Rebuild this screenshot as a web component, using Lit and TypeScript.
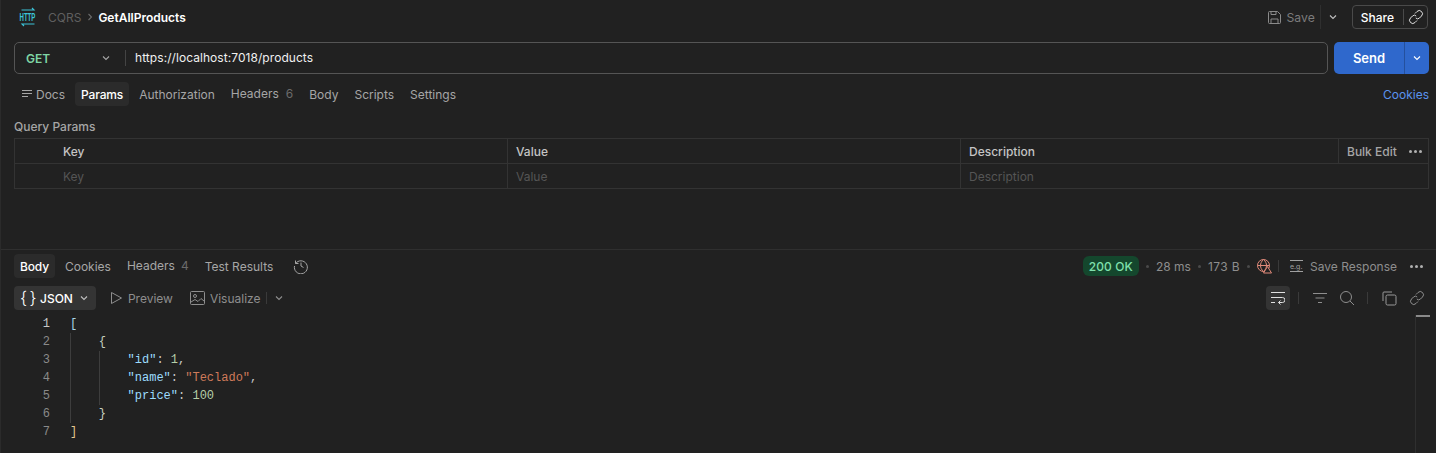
import { LitElement, html, css } from "lit";
import { customElement } from "lit/decorators.js";

const chev = (c = "#a6a6a6") => html`<svg width="10" height="10" viewBox="0 0 10 10" fill="none" stroke=${c} stroke-width="1.1"><path d="M2 3.5 5 6.5 8 3.5"/></svg>`;
const link = (c = "#b0b0b0") => html`<svg width="16" height="16" viewBox="0 0 16 16" fill="none" stroke=${c} stroke-width="1"><path d="M7 4.5 9 2.5a2.6 2.6 0 0 1 4.5 4.5L11.5 9a2.6 2.6 0 0 1-3.7 0"/><path d="M9 11.500 7 13.500A2.600 2.600 0 0 1 2.500 9L4.500 7a2.600 2.600 0 0 1 3.700 0"/></svg>`;

@customElement("app-root")
export class AppRoot extends LitElement {
  static styles = css`
    :host { display: block; height: 453px; overflow: hidden; background: #212121; color: #a6a6a6; font-family: Inter, "Liberation Sans", sans-serif; font-size: 12px; border-left: 1px solid #2b2b2b; box-sizing: border-box; }
    svg { display: block; flex: none; }
    .row { display: flex; align-items: center; }

    .top { height: 34px; padding: 0 8px 0 17px; justify-content: space-between; }
    .dim { color: #5f5f5f; margin-left: 10px; margin-right: 4px; }
    .cur { color: #fff; font-weight: 600; margin-left: 3px; }
    .save { color: #7c7c7c; gap: 5px; font-size: 12.2px; margin-right: 5px; }
    .vline { width: 1px; background: #2f2f2f; height: 24px; }
    .top-chev { margin: 0 14px 0 7px; }
    .share { border: 1px solid #4a4a4a; border-radius: 4px; height: 24px; box-sizing: border-box; padding: 0 3px 0 8px; color: #fff; font-weight: 500; }
    .share i { width: 1px; height: 16px; background: #4a4a4a; margin: 0 4px 0 9px; }

    .urlbar { margin-top: 8px; padding: 0 7px 0 13px; gap: 6px; }
    .url { flex: 1; height: 32px; box-sizing: border-box; border: 1px solid #555; border-radius: 5px; }
    .method { width: 110px; padding-left: 11px; padding-right: 14px; box-sizing: border-box; justify-content: space-between; color: #7fd6a5; font-weight: 600; }
    .url i { width: 1px; height: 16px; background: #444; }
    .addr { margin-left: 9px; padding-bottom: 2px; color: #f0f0f0; letter-spacing: .06px; }
    .send { background: #2f68cc; border-radius: 5px; height: 32px; width: 95px; color: #fff; font-weight: 600; font-size: 13px; }
    .send span { flex: 1; text-align: center; }
    .send div { width: 25px; height: 32px; border-left: 1px solid #24509e; display: flex; align-items: center; justify-content: center; box-sizing: border-box; }

    .tabs { gap: 4px; }
    .tab { padding: 0 6px; height: 24px; display: flex; align-items: center; gap: 7px; border-radius: 4px; }
    .tab.docs { gap: 3px; }
    .tab.hd { box-sizing: border-box; padding-bottom: 2px; }
    .tab.on { background: #2b2b2b; color: #fff; font-weight: 500; letter-spacing: -.15px; }
    .tab em { font-style: normal; color: #6b6b6b; }
    .tabs1 { margin-top: 8px; padding: 0 7px 0 14px; justify-content: space-between; }
    .cookies { color: #5a93ee; }

    .qp { margin: 13px 0 3px 13px; font-weight: 500; line-height: 16px; }
    .tbl { margin: 0 7px 0 13px; border: 1px solid #333; display: grid; grid-template-columns: 493px 453px 378px 1fr; }
    .tbl > div { height: 25px; box-sizing: border-box; display: flex; align-items: center; border-bottom: 1px solid #333; border-right: 1px solid #333; padding-left: 8px; font-weight: 500; color: #c4c4c4; }
    .tbl > .first { padding-left: 48px; }
    .tbl > .ph { height: 24px; border-bottom: 0; color: #555; font-weight: 400; }
    .tbl > .nb { border-right: 0; }
    .tbl > .bulk { border-right: 0; justify-content: space-between; padding-right: 6px; color: #a6a6a6; }
    .dots { gap: 2px; }
    .dots i { width: 3px; height: 3px; background: #b0b0b0; border-radius: 50%; }

    .divider { height: 1px; background: #2f2f2f; margin-top: 60px; }
    .tabs2 { margin-top: 4px; padding: 0 13px 0 13px; justify-content: space-between; }
    .tabs2 .tab.hd { gap: 6px; }
    .hist { margin-left: 10px; }
    .stats { gap: 6px; color: #8e8e8e; }
    .badge { background: #14472d; color: #7fe0ac; border-radius: 6px; height: 20px; padding: 0 6px; display: flex; align-items: center; font-weight: 500; letter-spacing: .1px; }
    .dot { width: 3px; height: 3px; border-radius: 50%; background: #4a4a4a; margin: 0 1px; }
    .size { letter-spacing: .4px; }
    .globe { margin-left: -1px; }
    .sep2 { width: 1px; height: 12px; background: #3a3a3a; margin-right: 4px; }
    .more { margin-left: 7px; }

    .tools { margin-top: 8px; padding: 0 11px 0 13px; justify-content: space-between; }
    .tl { gap: 13px; }
    .json { background: #343434; border-radius: 4px; height: 24px; padding: 0 7px 0 6px; color: #fff; font-weight: 500; }
    .json b { font: 300 17px Inter, sans-serif; letter-spacing: 2.5px; margin-right: 1px; width: 19px; white-space: nowrap; }
    .json span { margin-right: 6px; }
    .ghost { color: #8e8e8e; gap: 5px; display: flex; align-items: center; }
    .viz { margin-left: 4px; }
    .sep { width: 1px; height: 12px; background: #3a3a3a; }
    .s1 { margin-left: -8px; }
    .c1 { margin-left: -6px; }
    .wrap { background: #343434; border-radius: 4px; width: 24px; height: 24px; display: flex; align-items: center; justify-content: center; }
    .m8 { margin-left: 8px; } .m13 { margin-left: 13px; } .m11 { margin-left: 11px; } .m12 { margin-left: 12px; } .m14 { margin-left: 14px; }

    .code { position: relative; margin-top: 5px; font: 12px/18px "Liberation Mono", monospace; }
    .ln { display: flex; height: 18px; }
    .n { width: 49px; text-align: right; color: #8a8a8a; }
    .n.act { color: #c8c8c8; }
    .ln pre { margin: 0; font: inherit; color: #c9c9c9; padding-left: 20px; }
    .k { color: #9cdcfe; } .s { color: #ce7a5a; } .v { color: #b5cea8; } .b { color: #e0c890; } .c { color: #a8d4e6; } .g { color: #c8d0c0; }
    .guide { position: absolute; width: 1px; background: #3d3d3d; }
    .g1 { left: 69px; top: 18px; height: 90px; }
    .g2 { left: 98px; top: 36px; height: 54px; }
    .mini { position: absolute; left: 1414px; top: 0; width: 14px; height: 140px; border-left: 1px solid #2f2f2f; }
    .mini::before { content: ""; display: block; height: 2px; background: #8a8a8a; }
    .logo text { font: 700 8px "Liberation Sans", sans-serif; fill: #3cc4d8; }
  `;

  render() {
    const dots = html`<div class="row dots"><i></i><i></i><i></i></div>`;
    const lines = [
      html`<span class="c">[</span>`,
      html`    <span class="g">{</span>`,
      html`        <span class="k">"id"</span>: <span class="v">1</span>,`,
      html`        <span class="k">"name"</span>: <span class="s">"Teclado"</span>,`,
      html`        <span class="k">"price"</span>: <span class="v">100</span>`,
      html`    <span class="g">}</span>`,
      html`<span class="b">]</span>`,
    ];
    return html`
      <div class="row top">
        <div class="row">
          <svg class="logo" width="20" height="20" viewBox="0 0 20 20" fill="none" stroke="#3cc4d8" stroke-width="1.1">
            <path d="M3.500 3H16L14 1M16.500 17H4L6 19"/>
            <text transform="translate(1.500 14) scale(.76 1.300)" stroke="none">HTTP</text>
          </svg>
          <span class="dim">CQRS</span>
          <svg width="10" height="10" viewBox="0 0 10 10" fill="none" stroke="#6b6b6b" stroke-width="1.1"><path d="M3.500 2 6.500 5 3.500 8"/></svg>
          <span class="cur">GetAllProducts</span>
        </div>
        <div class="row">
          <div class="row save">
            <svg width="15" height="15" viewBox="0 0 15 15" fill="none" stroke="#8a8a8a" stroke-width="1"><path d="M1.500 2.500a1 1 0 0 1 1-1h8l3 3v8a1 1 0 0 1-1 1h-10a1 1 0 0 1-1-1zM4 1.500v3h5v-3M4 13.500v-4.500h7v4.500"/></svg>
            <span>Save</span>
          </div>
          <div class="vline"></div>
          <div class="top-chev">${chev("#c0c0c0")}</div>
          <div class="row share"><span>Share</span><i></i>${link("#e0e0e0")}</div>
        </div>
      </div>

      <div class="row urlbar">
        <div class="row url">
          <div class="row method"><span>GET</span>${chev()}</div><i></i><span class="addr">https://localhost:7018/products</span>
        </div>
        <div class="row send"><span>Send</span><div>${chev("#fff")}</div></div>
      </div>

      <div class="row tabs1">
        <div class="row tabs">
          <div class="tab docs"><svg width="12" height="12" viewBox="0 0 12 12" stroke="#a6a6a6" fill="none"><path d="M1 2.500H11M1 5.500H11M1 8.500H7"/></svg>Docs</div>
          <div class="tab on">Params</div>
          <div class="tab">Authorization</div>
          <div class="tab hd">Headers <em>6</em></div>
          <div class="tab">Body</div>
          <div class="tab">Scripts</div>
          <div class="tab">Settings</div>
        </div>
        <span class="cookies">Cookies</span>
      </div>

      <div class="qp">Query Params</div>
      <div class="tbl">
        <div class="first">Key</div><div>Value</div><div>Description</div>
        <div class="bulk"><span>Bulk Edit</span>${dots}</div>
        <div class="first ph">Key</div><div class="ph">Value</div><div class="ph nb">Description</div><div class="ph nb"></div>
      </div>

      <div class="divider"></div>

      <div class="row tabs2">
        <div class="row tabs">
          <div class="tab on">Body</div>
          <div class="tab">Cookies</div>
          <div class="tab hd">Headers <em>4</em></div>
          <div class="tab">Test Results</div>
          <svg class="hist" width="16" height="16" viewBox="0 0 16 16" fill="none" stroke="#a6a6a6" stroke-width="1"><path d="M2.600 5.500A6.500 6.500 0 1 1 1.500 8M2.500 2.500v3h3M8 4.500V8l2.500 1.500"/></svg>
        </div>
        <div class="row stats">
          <span class="badge">200 OK</span><i class="dot"></i><span>28 ms</span><i class="dot"></i><span class="size">173 B</span><i class="dot"></i>
          <svg class="globe" width="16" height="16" viewBox="0 0 16 16" fill="none" stroke="#e08a7a" stroke-width="1"><circle cx="7.500" cy="7.500" r="6"/><path d="M1.500 7.500h12M7.500 1.500c-4 3.500-4 8.500 0 12M7.500 1.500c4 3.500 4 8.500 0 12"/><path fill="#212121" d="M11.500 8.500 15.500 15h-8z"/></svg>
          <div class="sep2"></div>
          <svg width="15" height="14" viewBox="0 0 15 14" fill="none" stroke="#a0a0a0"><path d="M1 1.500H14M1 12.500H14"/><text x="1" y="9.500" font-size="7" fill="#a0a0a0" stroke="none" font-family="Inter">e.g.</text></svg>
          <span>Save Response</span>
          <div class="more">${dots}</div>
        </div>
      </div>

      <div class="row tools">
        <div class="row tl">
          <div class="row json"><b>{}</b><span>JSON</span>${chev("#c0c0c0")}</div>
          <span class="ghost"><svg width="14" height="14" viewBox="0 0 14 14" fill="none" stroke="#8e8e8e"><path d="M2.500 1.500 12.500 7 2.500 12.500z"/></svg>Preview</span>
          <span class="ghost viz"><svg width="15" height="14" viewBox="0 0 15 14" fill="none" stroke="#8e8e8e"><rect x=".5" y=".5" width="14" height="13" rx="1"/><circle cx="5" cy="5" r="1.500"/><path d="M1 11 5 8.500 8 10.500 11 7.500 14 10"/></svg>Visualize</span>
          <div class="sep s1"></div>
          <div class="c1">${chev("#8e8e8e")}</div>
        </div>
        <div class="row">
          <div class="wrap"><svg width="14" height="14" viewBox="0 0 14 14" fill="none" stroke="#e0e0e0"><path d="M0 1.500H14M0 6.500H11.500a2.500 2.500 0 0 1 0 5H7.500M9.500 9.500 7.500 11.500 9.500 13.500M0 11.500H4"/></svg></div>
          <div class="sep m8"></div>
          <svg class="m13" width="16" height="14" viewBox="0 0 16 14" fill="none" stroke="#8e8e8e"><path d="M1 2.500H15M3.500 7H12.500M6 11.500H10"/></svg>
          <svg class="m11" width="16" height="16" viewBox="0 0 16 16" fill="none" stroke="#8e8e8e"><circle cx="7" cy="7" r="5.500"/><path d="M11 11 15 15"/></svg>
          <div class="sep m12"></div>
          <svg class="m14" width="15" height="15" viewBox="0 0 15 15" fill="none" stroke="#9a9a9a"><path d="M1 10V2a1 1 0 0 1 1-1h8"/><rect x="4" y="4" width="10" height="10" rx="1.500"/></svg>
          <div class="m12">${link("#8e8e8e")}</div>
        </div>
      </div>

      <div class="code">
        ${lines.map((l, i) => html`<div class="ln"><span class="n ${i === 0 ? "act" : ""}">${i + 1}</span><pre>${l}</pre></div>`)}
        <div class="guide g1"></div>
        <div class="guide g2"></div>
        <div class="mini"></div>
      </div>
    `;
  }
}
